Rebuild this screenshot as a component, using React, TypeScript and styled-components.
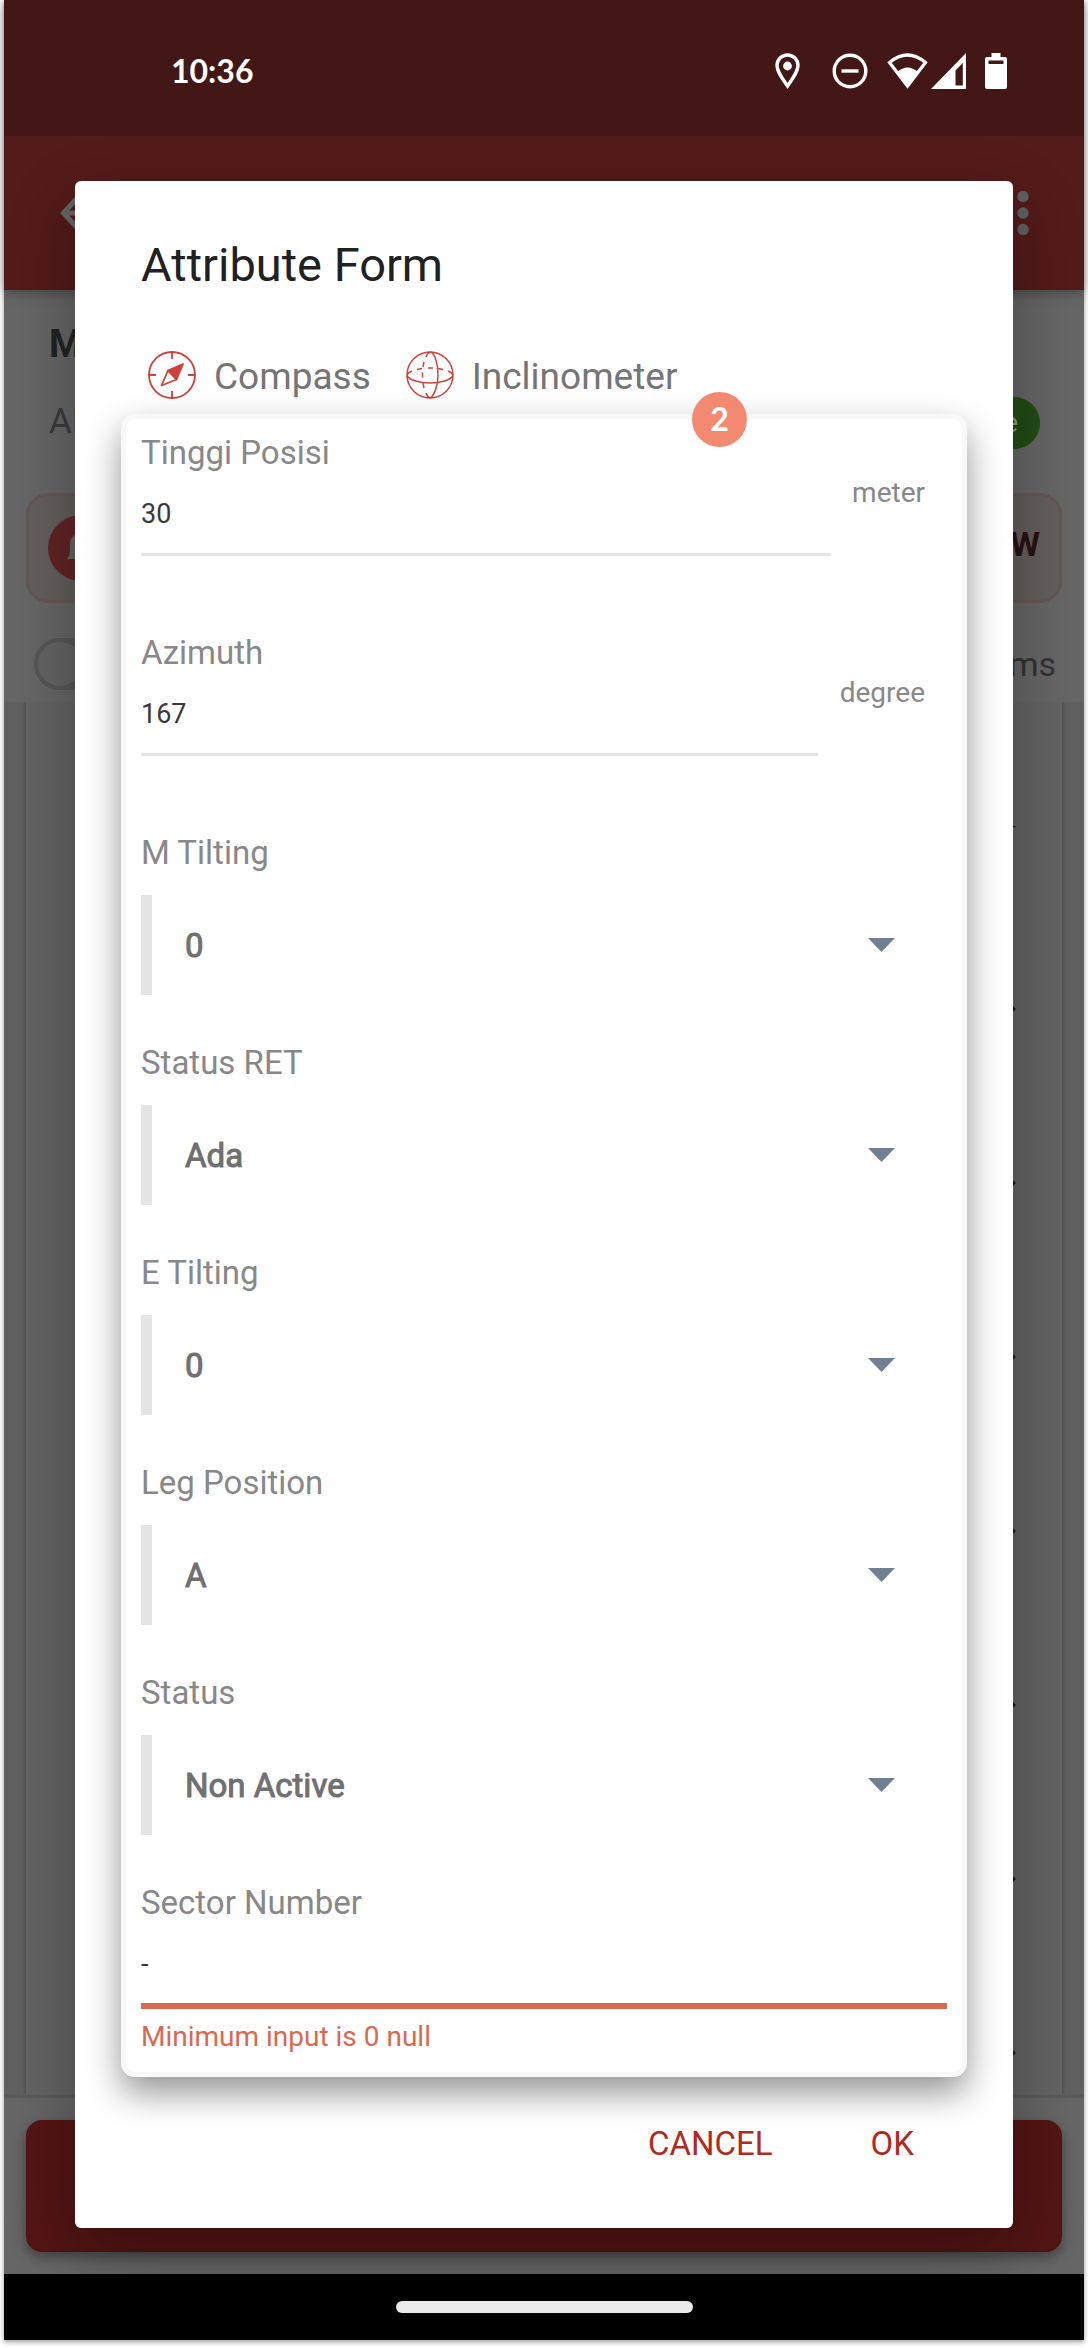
import React from "react";
import styled, { createGlobalStyle } from "styled-components";

const Global = createGlobalStyle`
  *, *::before, *::after { box-sizing: border-box; }
  body { margin: 0; background: #fff; font-family: Roboto, "Liberation Sans", sans-serif; }
  button, input, select { font-family: inherit; margin: 0; }
`;

const Page = styled.div`
  padding: 0 4px 8px;
`;

const Phone = styled.div`
  display: grid;
  grid-template-columns: minmax(0, 1fr);
  box-shadow: 0 2px 5px rgba(0, 0, 0, 0.4);
`;

/* ---------- dimmed app behind the dialog ---------- */

const AppLayer = styled.div`
  grid-area: 1 / 1;
  display: flex;
  flex-direction: column;
  min-width: 0;
  background: #666;
`;

const StatusBar = styled.header`
  grid-area: 1 / 1;
  z-index: 2;
  align-self: start;
  height: 136px;
  padding: 6px 77px 0 167px;
  display: flex;
  align-items: center;
  justify-content: space-between;
  background: #431716;
  color: #fff;
`;

const Clock = styled.time`
  font: 700 32px/40px Lato, Roboto, sans-serif;
`;

const StatusIcons = styled.div`
  display: flex;
  align-items: center;
`;

const StatusIcon = styled.svg<{ $w: number; $gap: number }>`
  display: block;
  width: ${(p) => p.$w}px;
  height: 36px;
  margin-left: ${(p) => p.$gap}px;
`;

const AppBar = styled.div`
  height: 290px;
  padding: 136px 55px 0 56px;
  display: flex;
  align-items: center;
  justify-content: space-between;
  background: #531b1a;
  color: #666;
  box-shadow: 0 2px 12px rgba(0, 0, 0, 0.35);
`;

const PageHead = styled.div`
  padding: 32px 44px 0 45px;
`;

const PageTitle = styled.h1`
  margin: 0;
  font-size: 38px;
  line-height: 44px;
  font-weight: 700;
  color: #232323;
`;

const HeadRow = styled.div`
  display: flex;
  justify-content: space-between;
  margin-top: 31px;
`;

const SubTitle = styled.span`
  font-size: 35px;
  line-height: 50px;
  color: #3b3b3b;
`;

const Pill = styled.span`
  height: 52px;
  padding: 0 22px;
  border-radius: 26px;
  background: #224c15;
  color: #8d9c88;
  font-size: 27px;
  line-height: 52px;
`;

const Notice = styled.div`
  height: 110px;
  margin: 44px 22px 0;
  padding: 0 19px;
  display: flex;
  align-items: center;
  justify-content: space-between;
  border: 3px solid #655756;
  border-radius: 22px;
  background: #625f5c;
`;

const NoticeIcon = styled.span`
  width: 66px;
  height: 66px;
  display: grid;
  place-items: center;
  border-radius: 50%;
  background: #622424;
  color: #666;
`;

const NoticeLink = styled.a`
  padding-bottom: 8px;
  font-size: 34px;
  line-height: 40px;
  font-weight: 700;
  color: #2a1112;
  text-decoration: none;
`;

const FilterRow = styled.div`
  height: 99px;
  padding: 22px 28px 0 30px;
  display: flex;
  align-items: center;
  justify-content: space-between;
  font-size: 34px;
  color: #333;
`;

const Track = styled.input`
  appearance: none;
  width: 96px;
  height: 52px;
  margin: 0;
  border: 0;
  border-radius: 26px;
  background: #575757;

  &::before {
    content: "";
    display: block;
    width: 52px;
    height: 52px;
    border: 4px solid #575757;
    border-radius: 50%;
    background: #646464;
  }
`;

const ListArea = styled.div`
  flex: 1;
  contain: size;
  overflow: hidden;
  padding: 0 22px;
  background: #616161;
  border-bottom: 3px solid #5b5b5b;
`;

const List = styled.ul`
  height: 100%;
  margin: 0;
  padding: 0 46px 0 0;
  list-style: none;
  background: #646464;
  box-shadow: 0 0 4px rgba(0, 0, 0, 0.35);
`;

const ListItem = styled.li<{ $head?: boolean }>`
  height: ${(p) => (p.$head ? 220 : 174)}px;
  padding-top: ${(p) => (p.$head ? 28 : 0)}px;
  display: flex;
  align-items: center;
  justify-content: flex-end;
  color: #222;
`;

const BottomBar = styled.div`
  padding: 22px 22px 88px;
`;

const Submit = styled.button`
  display: block;
  width: 100%;
  height: 132px;
  border: 0;
  border-radius: 16px;
  background: #531513;
  box-shadow: 0 5px 12px rgba(0, 0, 0, 0.35);
`;

const NavBar = styled.div`
  grid-area: 1 / 1;
  z-index: 2;
  align-self: end;
  height: 66px;
  display: grid;
  place-items: center;
  background: #000;
`;

const NavHandle = styled.div`
  width: 297px;
  height: 12px;
  border-radius: 6px;
  background: #ebebeb;
`;

/* ---------- dialog ---------- */

const DialogLayer = styled.div`
  grid-area: 1 / 1;
  z-index: 1;
  padding: 181px 71px 112px;
  min-width: 0;
`;

const Dialog = styled.form`
  padding: 56px 0 35px;
  border-radius: 6px;
  background: #fff;
  box-shadow: 0 24px 66px rgba(0, 0, 0, 0.32);
`;

const DialogTitle = styled.h2`
  margin: 0 66px;
  font-size: 47px;
  line-height: 56px;
  font-weight: 400;
  color: #212121;
`;

const Tools = styled.div`
  display: flex;
  gap: 35px;
  margin: 58px 73px 11px;
`;

const Tool = styled.button`
  display: flex;
  gap: 18px;
  padding: 0;
  border: 0;
  background: none;
  color: #757575;
  font-size: 37px;
  line-height: 52px;

  svg {
    display: block;
    width: 48px;
    height: 48px;
    color: #d0423c;
  }
`;

const Card = styled.div`
  position: relative;
  margin: 0 46px;
  padding: 14px 15px 17px;
  border: 5px solid #f8f8f8;
  border-radius: 14px;
  background: #fff;
  box-shadow: 0 16px 34px rgba(0, 0, 0, 0.42);
`;

const Badge = styled.span`
  position: absolute;
  top: -27px;
  right: 215px;
  width: 55px;
  height: 55px;
  border-radius: 50%;
  background: rgba(243, 130, 105, 0.94);
  color: #fff;
  text-align: center;
  font: 700 32px/54px Lato, Roboto, sans-serif;
`;

const Label = styled.label`
  display: block;
  font-size: 33px;
  line-height: 40px;
  color: #888;
`;

const InputRow = styled.div<{ $last?: boolean }>`
  display: flex;
  gap: 22px;
  padding-right: ${(p) => (p.$last ? 0 : 22)}px;
  margin-bottom: ${(p) => (p.$last ? 10 : 77)}px;
`;

const Input = styled.input<{ $error?: boolean }>`
  flex: 1;
  min-width: 0;
  height: ${(p) => (p.$error ? 86 : 83)}px;
  padding: 2px 0 0;
  border: 0;
  border-bottom: ${(p) => (p.$error ? "6px solid #da6950" : "3px solid #e4e4e4")};
  border-radius: 0;
  outline: 0;
  background: none;
  color: #3a3a3a;
  font-size: 27px;
`;

const Unit = styled.span`
  font-size: 28px;
  line-height: 40px;
  color: #888;
`;

const ErrorText = styled.p`
  margin: 0;
  font-size: 28px;
  line-height: 36px;
  color: #da6950;
`;

const SelectBox = styled.div`
  display: grid;
  align-items: center;
  height: 100px;
  margin: 22px 0 48px;
  padding-right: 52px;
  border-left: 11px solid #e4e4e4;

  > * {
    grid-area: 1 / 1;
  }

  svg {
    justify-self: end;
    width: 27px;
    height: 14px;
    color: #708090;
    pointer-events: none;
  }
`;

const Select = styled.select`
  appearance: none;
  width: 100%;
  height: 100px;
  padding: 0 0 0 33px;
  border: 0;
  background: none;
  color: #707070;
  font-size: 33px;
  -webkit-text-stroke: 1px #707070;
`;

const Actions = styled.div`
  display: flex;
  justify-content: flex-end;
  margin-top: 17px;
  padding-right: 50px;
`;

const Action = styled.button`
  height: 99px;
  padding: 0 49px;
  border: 0;
  background: none;
  color: #b02a1d;
  font-size: 33px;
`;

/* ---------- icons ---------- */

const PinIcon = () => (
  <StatusIcon $w={25} $gap={0} viewBox="0 0 25 36" fill="none">
    <path d="M12.5 33C7 25 2 18.500 2 12.500a10.500 10.500 0 0 1 21 0C23 18.500 18 25 12.500 33Z" stroke="#fff" strokeWidth="3.400" />
    <circle cx="12.500" cy="13" r="4.400" fill="#fff" />
  </StatusIcon>
);

const DndIcon = () => (
  <StatusIcon $w={36} $gap={32} viewBox="0 0 36 36" fill="none" stroke="#fff" strokeWidth="3.400">
    <circle cx="18" cy="18" r="15.800" />
    <path d="M9.500 18h17" />
  </StatusIcon>
);

const WifiIcon = () => (
  <StatusIcon $w={41} $gap={19} viewBox="0 0 41 36" fill="none">
    <path d="M2.500 9.500Q20.500-5.500 38.500 9.500L20.500 33Z" stroke="#fff" strokeWidth="3.200" />
    <path d="M10 19q10.500-9 21 0L20.500 34Z" fill="#fff" />
  </StatusIcon>
);

const SignalIcon = () => (
  <StatusIcon $w={35} $gap={3} viewBox="0 0 35 36">
    <path fillRule="evenodd" fill="#fff" d="M35 0v36H0ZM31.800 10L24.500 17.500V32.500h7.300Z" />
  </StatusIcon>
);

const BatteryIcon = () => (
  <StatusIcon $w={22} $gap={19} viewBox="0 0 22 36">
    <path
      fillRule="evenodd"
      fill="#fff"
      d="M6.500 0h9v4H20a2 2 0 0 1 2 2v28a2 2 0 0 1-2 2H2a2 2 0 0 1-2-2V6a2 2 0 0 1 2-2h4.500ZM3.500 7.500v3.500h15V7.500Z"
    />
  </StatusIcon>
);

const BackIcon = () => (
  <svg width="44" height="44" viewBox="0 0 44 44" fill="none" stroke="currentColor" strokeWidth="5">
    <path d="M21 3L3.500 22 21 41M4 22h38" />
  </svg>
);

const MoreIcon = () => (
  <svg width="12" height="46" viewBox="0 0 12 46" fill="#606060">
    <circle cx="6" cy="6.500" r="5.700" />
    <circle cx="6" cy="23" r="5.700" />
    <circle cx="6" cy="39.500" r="5.700" />
  </svg>
);

const BellIcon = () => (
  <svg width="32" height="36" viewBox="0 0 32 36" fill="currentColor">
    <path d="M2 29c3-3 3-6 3-14C5 7 10 3 16 3s11 4 11 12c0 8 0 11 3 14Z" />
    <path d="M12 32h8a4 4 0 0 1-8 0Z" />
  </svg>
);

const Chevron = () => (
  <svg width="10" height="16" viewBox="0 0 10 16" fill="none" stroke="currentColor" strokeWidth="3">
    <path d="M1 1l7 7-7 7" />
  </svg>
);

const CompassIcon = () => (
  <svg viewBox="0 0 48 48" fill="none" stroke="currentColor" strokeWidth="1.800">
    <circle cx="24" cy="24" r="23" />
    <path d="M24 1v7M24 40v7M1 24h7M40 24h7" />
    <path d="M20 19.500L13.500 34.500 28.500 28.500Z" strokeLinejoin="round" />
    <path d="M20 19.500L35 13 28.500 28.500Z" fill="currentColor" strokeLinejoin="round" />
  </svg>
);

const GlobeIcon = () => (
  <svg viewBox="0 0 48 48" fill="none" stroke="currentColor" strokeWidth="1.500">
    <circle cx="24" cy="24" r="23" />
    <path d="M1 25c3 4 12 7 23 7s20-3 23-7" />
    <path d="M25 1c4 2 7 12 7 23s-4 21-8 23" />
    <path d="M1 24c1-2 2-3 5-4M11 18.500l5-1M22 17h5M32 17.500l5 1M42 20c3 1 4 2 5 4" />
    <path d="M24 1c-2 1-3 2-4 5M18 11l-1 5M16.500 21.500v5M17 32l1 5M20 42c1 3 2 4 4 5" />
  </svg>
);

const Caret = () => (
  <svg viewBox="0 0 27 14" aria-hidden="true">
    <path d="M0 0h27L13.500 14Z" fill="currentColor" />
  </svg>
);

/* ---------- form parts ---------- */

const TextField = ({ id, label, value, unit }: { id: string; label: string; value: string; unit: string }) => (
  <>
    <Label htmlFor={id}>{label}</Label>
    <InputRow>
      <Input id={id} defaultValue={value} />
      <Unit>{unit}</Unit>
    </InputRow>
  </>
);

const SelectField = ({ id, label, value }: { id: string; label: string; value: string }) => (
  <>
    <Label htmlFor={id}>{label}</Label>
    <SelectBox>
      <Select id={id} defaultValue={value}>
        <option>{value}</option>
      </Select>
      <Caret />
    </SelectBox>
  </>
);

const selects = [
  { id: "m-tilting", label: "M Tilting", value: "0" },
  { id: "status-ret", label: "Status RET", value: "Ada" },
  { id: "e-tilting", label: "E Tilting", value: "0" },
  { id: "leg-position", label: "Leg Position", value: "A" },
  { id: "status", label: "Status", value: "Non Active" },
];

const rows = [1, 2, 3, 4, 5, 6, 7];

export default function App() {
  return (
    <Page>
      <Global />
      <Phone>
        <AppLayer aria-hidden="true">
          <AppBar>
            <BackIcon />
            <MoreIcon />
          </AppBar>
          <PageHead>
            <PageTitle>M</PageTitle>
            <HeadRow>
              <SubTitle>AL</SubTitle>
              <Pill>e</Pill>
            </HeadRow>
          </PageHead>
          <Notice>
            <NoticeIcon>
              <BellIcon />
            </NoticeIcon>
            <NoticeLink href="#view">W</NoticeLink>
          </Notice>
          <FilterRow>
            <Track type="checkbox" aria-label="Filter" />
            <span>ms</span>
          </FilterRow>
          <ListArea>
            <List>
              <ListItem $head>-</ListItem>
              {rows.map((n) => (
                <ListItem key={n}>
                  <Chevron />
                </ListItem>
              ))}
            </List>
          </ListArea>
          <BottomBar>
            <Submit type="button" aria-label="Submit" />
          </BottomBar>
        </AppLayer>

        <StatusBar>
          <Clock>10:36</Clock>
          <StatusIcons>
            <PinIcon />
            <DndIcon />
            <WifiIcon />
            <SignalIcon />
            <BatteryIcon />
          </StatusIcons>
        </StatusBar>

        <DialogLayer>
          <Dialog onSubmit={(e) => e.preventDefault()}>
            <DialogTitle>Attribute Form</DialogTitle>
            <Tools>
              <Tool type="button">
                <CompassIcon />
                Compass
              </Tool>
              <Tool type="button">
                <GlobeIcon />
                Inclinometer
              </Tool>
            </Tools>
            <Card>
              <Badge>2</Badge>
              <TextField id="height" label="Tinggi Posisi" value="30" unit="meter" />
              <TextField id="azimuth" label="Azimuth" value="167" unit="degree" />
              {selects.map((s) => (
                <SelectField key={s.id} {...s} />
              ))}
              <Label htmlFor="sector">Sector Number</Label>
              <InputRow $last>
                <Input id="sector" $error defaultValue="-" aria-describedby="sector-error" />
              </InputRow>
              <ErrorText id="sector-error">Minimum input is 0 null</ErrorText>
            </Card>
            <Actions>
              <Action type="button">CANCEL</Action>
              <Action type="submit">OK</Action>
            </Actions>
          </Dialog>
        </DialogLayer>

        <NavBar>
          <NavHandle />
        </NavBar>
      </Phone>
    </Page>
  );
}
